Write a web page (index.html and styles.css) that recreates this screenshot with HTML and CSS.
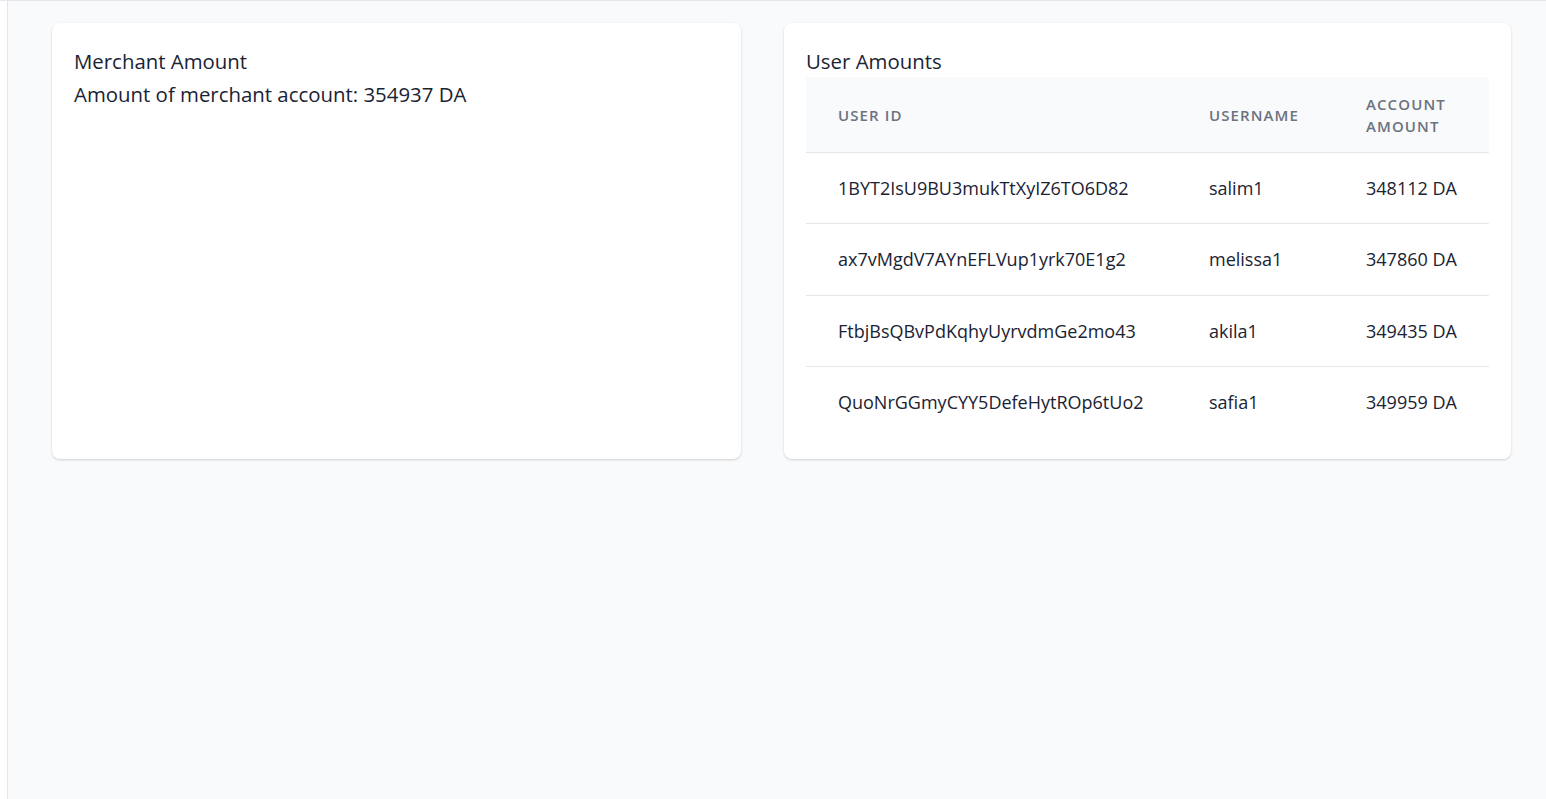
FILE: index.html
```html
<!DOCTYPE html>
<html>
<head>
<meta charset="utf-8">
<link rel="stylesheet" href="styles.css">
</head>
<body>
<div class="shell">
  <div class="rail"></div>
  <main class="main">
    <section class="card card-merchant">
      <h2 class="card-title">Merchant Amount</h2>
      <p class="card-text">Amount of merchant account: 354937 DA</p>
    </section>
    <section class="card card-users">
      <h2 class="card-title">User Amounts</h2>
      <table class="table">
        <thead>
          <tr>
            <th class="col-id">User ID</th>
            <th class="col-name">Username</th>
            <th class="col-amount">Account Amount</th>
          </tr>
        </thead>
        <tbody>
          <tr><td>1BYT2IsU9BU3mukTtXyIZ6TO6D82</td><td>salim1</td><td>348112 DA</td></tr>
          <tr><td>ax7vMgdV7AYnEFLVup1yrk70E1g2</td><td>melissa1</td><td>347860 DA</td></tr>
          <tr><td>FtbjBsQBvPdKqhyUyrvdmGe2mo43</td><td>akila1</td><td>349435 DA</td></tr>
          <tr><td>QuoNrGGmyCYY5DefeHytROp6tUo2</td><td>safia1</td><td>349959 DA</td></tr>
        </tbody>
      </table>
    </section>
  </main>
</div>
</body>
</html>
```
FILE: styles.css
```css
* { box-sizing: border-box; }
html, body { margin: 0; padding: 0; height: 100%; }
body {
  font-family: "Open Sans", "Noto Sans", sans-serif;
  color: #1a2333;
  background: #ffffff;
}
.shell {
  display: flex;
  height: 799px;
  border-top: 1px solid #e5e7eb;
}
.rail {
  width: 7px;
  flex: none;
  background: #ffffff;
}
.main {
  flex: 1;
  background: #f9fafb;
  border-left: 1px solid #e5e7eb;
  display: flex;
  align-items: flex-start;
  gap: 43px;
  padding: 22px 35px 0 44px;
}
.card {
  background: #ffffff;
  border-radius: 8px;
  box-shadow: 0 1px 3px rgba(0,0,0,0.12), 0 1px 2px rgba(0,0,0,0.06);
  padding: 22px;
  height: 436px;
}
.card-merchant { width: 689px; }
.card-users { width: 727px; }
.card-title {
  margin: 0;
  font-size: 20.4px;
  font-weight: 400;
  line-height: 32px;
}
.card-text {
  margin: 0;
  font-size: 20.4px;
  line-height: 34px;
}
.table {
  width: 100%;
  border-collapse: collapse;
}
.table th {
  background: #f9fafb;
  color: #6b7280;
  font-size: 15px;
  font-weight: 600;
  letter-spacing: 1.1px;
  text-transform: uppercase;
  text-align: left;
  line-height: 22px;
  padding: 16px 32px 15px 32px;
  border-bottom: 1px solid #e5e7eb;
}
.col-id { width: 371px; }
.col-name { width: 157px; }
.table td {
  font-size: 18px;
  line-height: 24px;
  padding: 23.2px 32px 23.1px 32px;
  border-bottom: 1px solid #e5e7eb;
}
.table tbody tr:last-child td { border-bottom: none; }
```
